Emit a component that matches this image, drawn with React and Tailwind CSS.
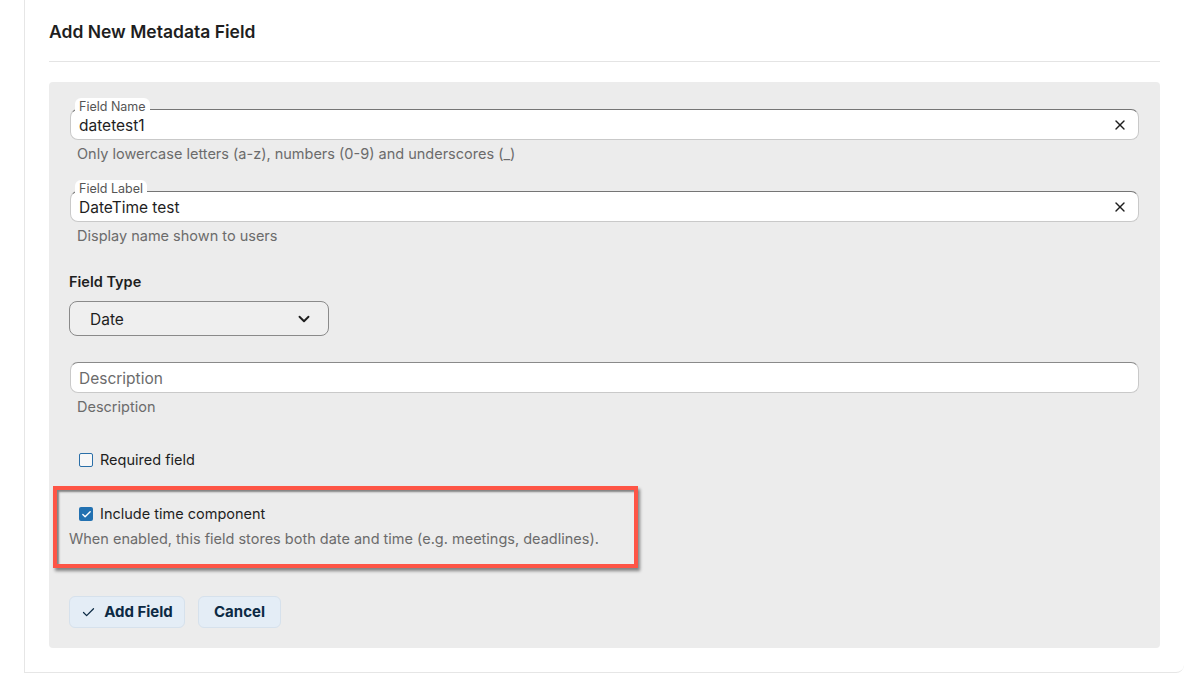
import { X, ChevronDown, Check } from "lucide-react";

function FloatInput({ label, value, className = "" }) {
  return (
    <div className={`relative pt-[11px] ${className}`}>
      <span className="absolute left-[5px] top-0 rounded-t-md bg-white px-[4px] pt-[2px] text-[12.5px] leading-[14px] text-[#555]">
        {label}
      </span>
      <div className="flex h-[31px] items-center rounded-lg border border-[#c9c9c9] border-t-[#757575] bg-white pl-[8px] pr-[10px] pt-[2px]">
        <span className="flex-1 text-[15.5px] text-[#1e1e1e]">{value}</span>
        <X size={16} strokeWidth={2} className="-mt-[2px] text-[#1e1e1e]" />
      </div>
    </div>
  );
}

function Helper({ children, className = "" }) {
  return (
    <p className={`pl-[8px] text-[14.5px] leading-5 text-[#6b6b6b] ${className}`}>
      {children}
    </p>
  );
}

export default function App() {
  return (
    <div
      className="min-h-[674px] bg-white"
      style={{ fontFamily: "Inter, 'Noto Sans', sans-serif" }}
    >
      <div className="ml-[24px] rounded-br-lg border-b border-l border-[#e6e6e6] pb-[24px] pl-[24px] pr-[24px] pt-[20px]">
        <h2 className="border-b border-[#e4e4e4] pb-[17px] text-[17.5px] font-semibold leading-6 text-[#1e1e1e]">
          Add New Metadata Field
        </h2>

        <div className="mt-[20px] rounded bg-[#ececec] pb-[20px] pl-[20px] pr-[21px] pt-[16px]">
          <FloatInput label="Field Name" value="datetest1" className="ml-px" />
          <Helper className="mt-[4px]">
            Only lowercase letters (a-z), numbers (0-9) and underscores (_)
          </Helper>

          <FloatInput label="Field Label" value="DateTime test" className="ml-px mt-[16px]" />
          <Helper className="mt-[4px]">Display name shown to users</Helper>

          <p className="mt-[26px] text-[14.5px] font-semibold leading-5 text-[#1e1e1e]">
            Field Type
          </p>
          <div className="mt-[9px] flex h-[35px] w-[260px] items-center justify-between rounded-lg border border-[#8a8a8a] bg-[#efefef] pl-[20px] pr-[15px] pt-[2px]">
            <span className="text-[15.5px] text-[#1e1e1e]">Date</span>
            <ChevronDown size={18} strokeWidth={2.5} className="-mt-[2px] text-[#1e1e1e]" />
          </div>

          <div className="ml-px mt-[26px] flex h-[31px] items-center rounded-lg border border-[#c9c9c9] border-t-[#8a8a8a] bg-white pl-[8px] pt-[2px]">
            <span className="text-[15.5px] text-[#6b6b6b]">Description</span>
          </div>
          <Helper className="mt-[4px]">Description</Helper>

          <label className="ml-[10px] mt-[33px] flex h-5 items-center gap-[7px]">
            <span className="h-[14px] w-[14px] rounded-[2px] border-[1.5px] border-[#2a6fa8] bg-[#f7f7f7]" />
            <span className="text-[14.5px] text-[#1e1e1e]">Required field</span>
          </label>

          <div className="-ml-[16px] mt-[16px] w-[585px] border-4 border-[#fe5546] pb-[15px] pl-[12px] pt-[14px] shadow-[2px_3px_3px_rgba(0,0,0,0.45),inset_2px_2px_2px_rgba(0,0,0,0.45)]">
            <label className="ml-[10px] flex h-5 items-center gap-[7px]">
              <span className="flex h-[14px] w-[14px] items-center justify-center rounded-[2px] bg-[#2271b1]">
                <Check size={11} strokeWidth={3} className="text-white" />
              </span>
              <span className="text-[14.5px] text-[#1e1e1e]">Include time component</span>
            </label>
            <p className="mt-[5px] text-[14.5px] leading-5 text-[#6b6b6b]">
              When enabled, this field stores both date and time (e.g. meetings, deadlines).
            </p>
          </div>

          <div className="mt-[28px] flex gap-[13px]">
            <button className="flex h-[32px] w-[116px] items-center justify-center gap-[8px] rounded-md border border-[#d6e1ec] bg-[#e4edf6] text-[15px] font-bold text-[#0c2a44]">
              <Check size={15} strokeWidth={2} />
              Add Field
            </button>
            <button className="flex h-[32px] w-[83px] items-center justify-center rounded-md border border-[#d6e1ec] bg-[#e4edf6] text-[15px] font-bold text-[#0c2a44]">
              Cancel
            </button>
          </div>
        </div>
      </div>
    </div>
  );
}
